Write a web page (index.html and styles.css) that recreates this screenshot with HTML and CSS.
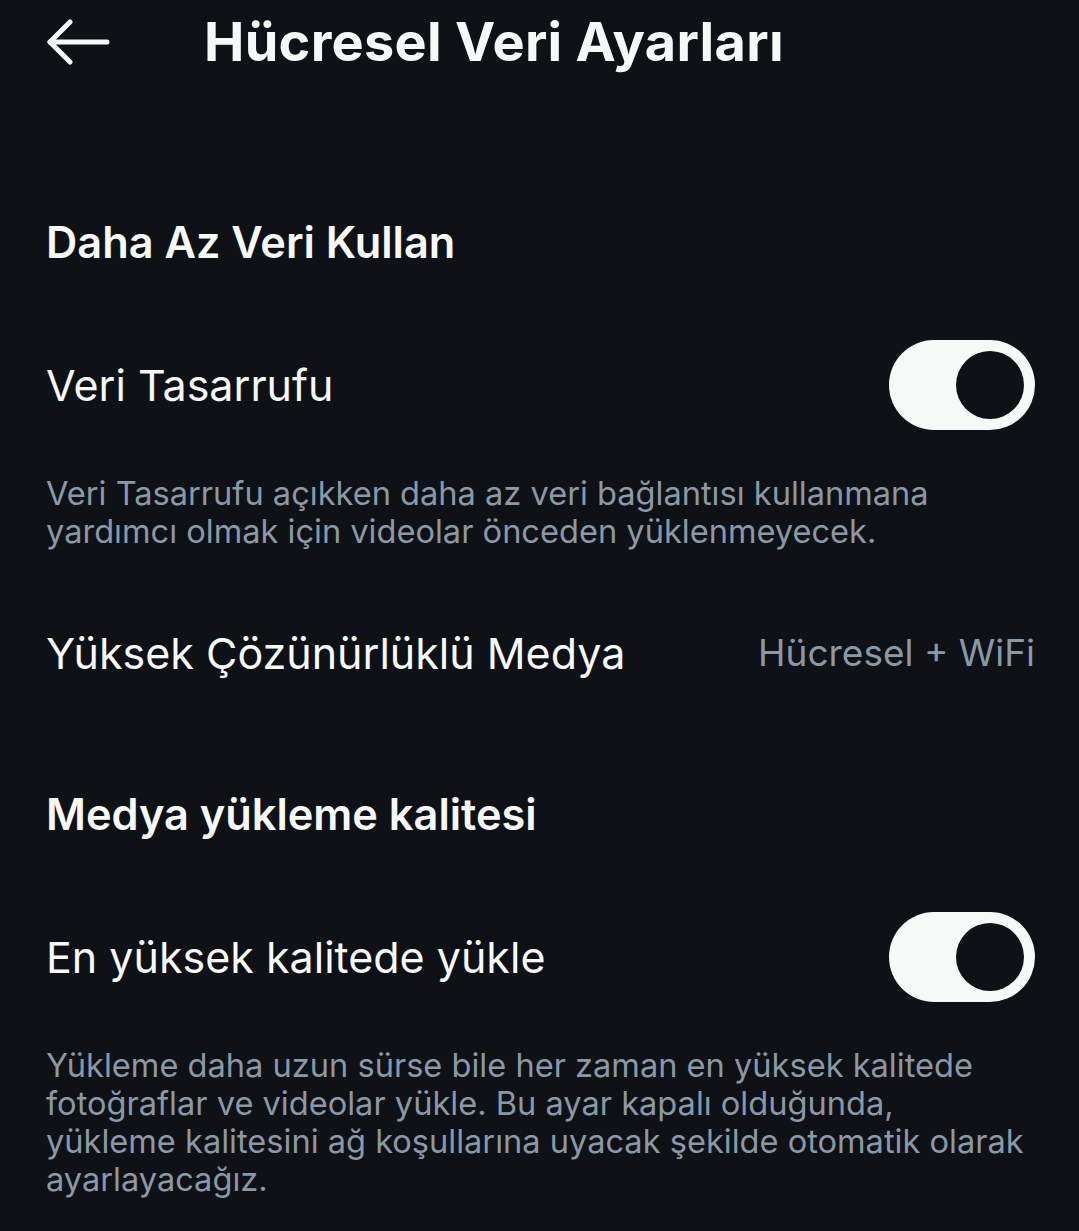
FILE: index.html
```html
<!DOCTYPE html>
<html lang="tr">
<head>
<meta charset="utf-8">
<title>Hücresel Veri Ayarları</title>
<link rel="stylesheet" href="styles.css">
</head>
<body>
<div class="screen">
  <header class="topbar">
    <button class="back" aria-label="Geri">
      <svg width="64" height="46" viewBox="0 0 64 46" fill="none" stroke="#f7f9f9" stroke-width="5" stroke-linecap="round" stroke-linejoin="round">
        <path d="M61 23H4"/>
        <path d="M24 3L4 23l20 20"/>
      </svg>
    </button>
    <h1 class="title">Hücresel Veri Ayarları</h1>
  </header>

  <section class="group first">
    <h2 class="group-title">Daha Az Veri Kullan</h2>
    <div class="row">
      <span class="row-label">Veri Tasarrufu</span>
      <span class="toggle on"><span class="knob"></span></span>
    </div>
    <p class="desc">Veri Tasarrufu açıkken daha az veri bağlantısı kullanmana<br>yardımcı olmak için videolar önceden yüklenmeyecek.</p>
    <div class="row link-row">
      <span class="row-label">Yüksek Çözünürlüklü Medya</span>
      <span class="row-value">Hücresel + WiFi</span>
    </div>
  </section>

  <section class="group second">
    <h2 class="group-title">Medya yükleme kalitesi</h2>
    <div class="row">
      <span class="row-label">En yüksek kalitede yükle</span>
      <span class="toggle on"><span class="knob"></span></span>
    </div>
    <p class="desc">Yükleme daha uzun sürse bile her zaman en yüksek kalitede<br>fotoğraflar ve videolar yükle. Bu ayar kapalı olduğunda,<br>yükleme kalitesini ağ koşullarına uyacak şekilde otomatik olarak<br>ayarlayacağız.</p>
  </section>
</div>
</body>
</html>
```

FILE: styles.css
```css
html, body {
  margin: 0;
  padding: 0;
  background: #0e1116;
}

body {
  font-family: Inter, "Noto Sans", "Liberation Sans", sans-serif;
  color: #f7f9f9;
  width: 1079px;
  height: 1231px;
  overflow: hidden;
}

.screen {
  padding: 0 44px 0 46px;
}

.topbar {
  display: flex;
  align-items: center;
  height: 84px;
}

.back {
  background: none;
  border: 0;
  padding: 0;
  margin: 0;
  width: 158px;
  display: flex;
  align-items: center;
  justify-content: flex-start;
  height: 46px;
}

.back svg {
  display: block;
}

.title {
  margin: 0;
  font-size: 54px;
  font-weight: 700;
  line-height: 1;
  letter-spacing: 0.3px;
  white-space: nowrap;
}

.group-title {
  margin: 0;
  font-size: 43.3px;
  font-weight: 600;
  line-height: 52px;
}

.group.first .group-title {
  margin-top: 132px;
}

.group.second .group-title {
  margin-top: 90px;
}

.row {
  display: flex;
  align-items: center;
  justify-content: space-between;
  height: 90px;
  margin-top: 72px;
}

.row-label {
  font-size: 43px;
  line-height: 52px;
  font-weight: 400;
}

.row-value {
  font-size: 37px;
  line-height: 52px;
  color: #8b98a5;
}

.link-row {
  margin-top: 58px;
}

.toggle {
  display: flex;
  align-items: center;
  justify-content: flex-end;
  width: 146px;
  height: 90px;
  border-radius: 45px;
  background: #f7f9f9;
  box-sizing: border-box;
  padding-right: 11px;
}

.knob {
  width: 68px;
  height: 68px;
  border-radius: 50%;
  background: #0e1116;
}

.desc {
  margin: 44px 0 0 0;
  font-size: 32.6px;
  line-height: 38px;
  color: #8b98a5;
  white-space: nowrap;
}
```
